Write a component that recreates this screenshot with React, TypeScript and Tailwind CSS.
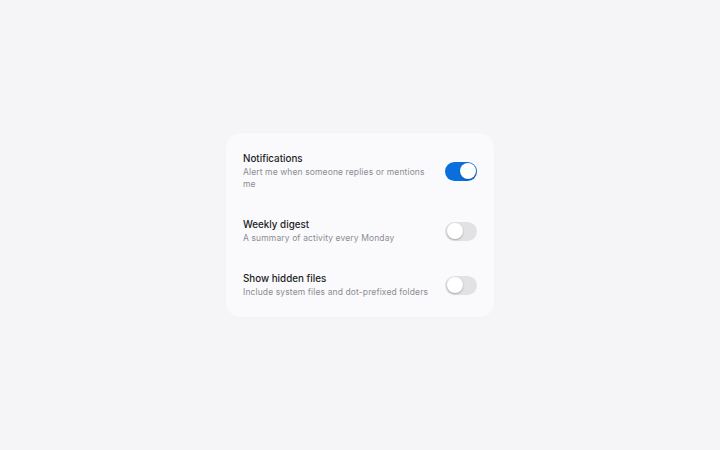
import { useState } from "react";

type Setting = {
  id: string;
  title: string;
  description: string;
  enabled: boolean;
};

const initialSettings: Setting[] = [
  {
    id: "notifications",
    title: "Notifications",
    description: "Alert me when someone replies or mentions me",
    enabled: true,
  },
  {
    id: "digest",
    title: "Weekly digest",
    description: "A summary of activity every Monday",
    enabled: false,
  },
  {
    id: "hidden",
    title: "Show hidden files",
    description: "Include system files and dot-prefixed folders",
    enabled: false,
  },
];

const Toggle = ({ on, onClick }: { on: boolean; onClick: () => void }) => (
  <button
    type="button"
    role="switch"
    aria-checked={on}
    onClick={onClick}
    className={`relative h-[19px] w-[32px] shrink-0 rounded-full transition-colors ${
      on ? "bg-[#0a6fdc]" : "bg-[#e2e2e5]"
    }`}
  >
    <span
      className={`absolute top-[1.5px] h-[16px] w-[16px] rounded-full bg-white shadow-[0_1px_2px_rgba(0,0,0,0.25)] transition-all ${
        on ? "left-[14.5px]" : "left-[1.5px]"
      }`}
    />
  </button>
);

const App = () => {
  const [settings, setSettings] = useState(initialSettings);

  const toggle = (id: string) => {
    setSettings((prev) =>
      prev.map((s) => (s.id === id ? { ...s, enabled: !s.enabled } : s))
    );
  };

  return (
    <div
      className="flex h-screen w-full items-center justify-center bg-[#f5f5f7]"
      style={{ fontFamily: "Inter, 'Noto Sans', sans-serif" }}
    >
      <div className="flex w-[268px] flex-col gap-[28px] rounded-[14px] bg-[#fafafc] px-[17px] py-[19px] shadow-[0_0_2px_rgba(0,0,0,0.03)]">
        {settings.map((s) => (
          <div key={s.id} className="flex items-center gap-3">
            <div className="min-w-0 flex-1">
              <p className="text-[9.8px] font-medium leading-[14px] text-[#1d1d1f]">
                {s.title}
              </p>
              <p className="text-[8.5px] leading-[12px] tracking-[0.12px] text-[#8c8c91]">
                {s.description}
              </p>
            </div>
            <Toggle on={s.enabled} onClick={() => toggle(s.id)} />
          </div>
        ))}
      </div>
    </div>
  );
};

export default App;
